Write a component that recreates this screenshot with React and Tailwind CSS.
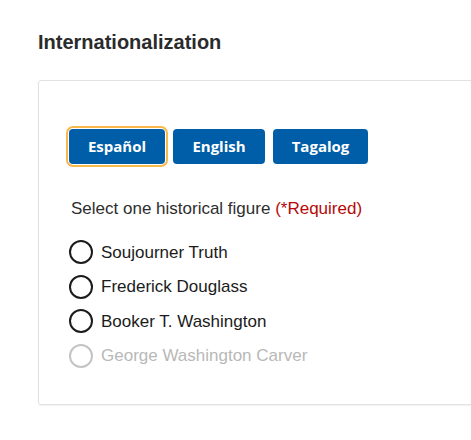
import { useState } from "react";

const figures = [
  { name: "Soujourner Truth" },
  { name: "Frederick Douglass" },
  { name: "Booker T. Washington" },
  { name: "George Washington Carver", disabled: true },
];

function Radio({ label, disabled }) {
  return (
    <label className="flex items-center h-[34.5px] cursor-pointer">
      <span
        className={`w-[24px] h-[24px] rounded-full border-2 bg-white ${
          disabled ? "border-[#c4c4c4]" : "border-[#1b1b1b]"
        }`}
      />
      <span
        className={`ml-[8px] text-[17px] ${
          disabled ? "text-[#b8b8b8]" : "text-[#1b1b1b]"
        }`}
      >
        {label}
      </span>
    </label>
  );
}

export default function App() {
  const [lang, setLang] = useState("es");

  return (
    <div className="w-[471px] h-[440px] bg-white overflow-hidden font-['Liberation_Sans',Arial,sans-serif]">
      <h2 className="pl-[38px] pt-[30px] text-[20px] font-bold text-[#2b2b2b] leading-[25px]">
        Internationalization
      </h2>
      <div className="ml-[38px] mt-[25px] w-[460px] h-[325px] border border-[#e2e2e2] rounded-[3px] shadow-[0_1px_2px_rgba(0,0,0,0.06)] pl-[30px] pt-[48px]">
        <div className="flex gap-[8px] font-['Open_Sans',sans-serif]">
          {[
            ["es", "Español", "w-[96px]"],
            ["en", "English", "w-[92px]"],
            ["tl", "Tagalog", "w-[95px]"],
          ].map(([id, label, w]) => (
            <button
              key={id}
              onClick={() => setLang(id)}
              className={`${w} h-[35px] rounded-[4px] bg-[#005ea8] text-white text-[15px] font-bold ${
                lang === id ? "outline-2 outline-offset-[1px] outline-[#f9b84a]" : ""
              }`}
            >
              {label}
            </button>
          ))}
        </div>
        <p className="mt-[36px] ml-[2px] text-[17px] text-[#2e2e2e] leading-[18px]">
          Select one historical figure{" "}
          <span className="text-[#b50909]">(*Required)</span>
        </p>
        <div className="mt-[17px] flex flex-col">
          {figures.map((f) => (
            <Radio key={f.name} label={f.name} disabled={f.disabled} />
          ))}
        </div>
      </div>
    </div>
  );
}
